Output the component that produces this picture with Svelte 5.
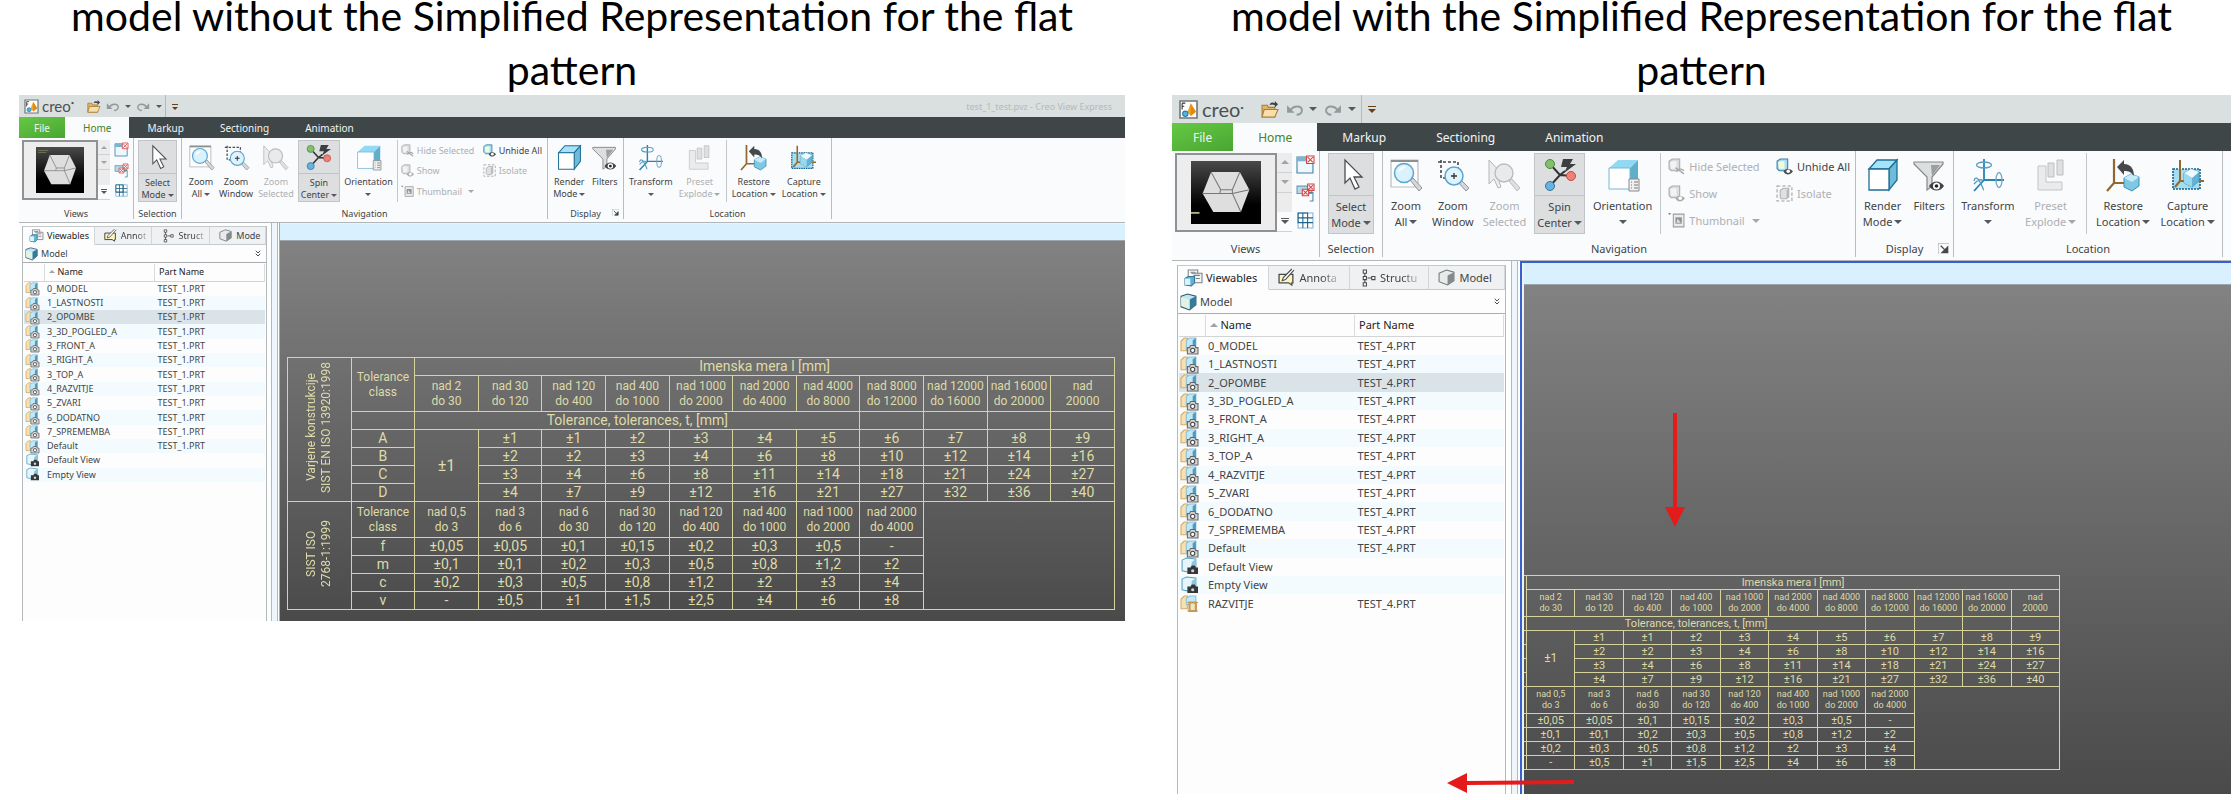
<script>
  const names = [
    "0_MODEL",
    "1_LASTNOSTI",
    "2_OPOMBE",
    "3_3D_POGLED_A",
    "3_FRONT_A",
    "3_RIGHT_A",
    "3_TOP_A",
    "4_RAZVITJE",
    "5_ZVARI",
    "6_DODATNO",
    "7_SPREMEMBA",
    "Default",
  ];

  const listFor = (part) => [
    ...names.map((name) => ({ name, part, icon: "combo" })),
    { name: "Default View", part: "", icon: "view" },
    { name: "Empty View", part: "", icon: "view" },
  ];

  const windows = [
    {
      id: "without",
      size: "compact",
      caption: "model without the Simplified Representation for the flat pattern",
      title: "test_1_test.pvz - Creo View Express",
      tabs: ["Viewables", "Annot", "Struct", "Mode"],
      rows: listFor("TEST_1.PRT"),
      moved: false,
    },
    {
      id: "with",
      size: "regular",
      caption: "model with the Simplified Representation for the flat pattern",
      title: "",
      tabs: ["Viewables", "Annota", "Structu", "Model"],
      rows: [
        ...listFor("TEST_4.PRT"),
        { name: "RAZVITJE", part: "TEST_4.PRT", icon: "flat" },
      ],
      moved: true,
    },
  ];

  const tabIcons = ["viewables", "annot", "struct", "model"];

  const weldSizes = [
    ["nad 2", "do 30"],
    ["nad 30", "do 120"],
    ["nad 120", "do 400"],
    ["nad 400", "do 1000"],
    ["nad 1000", "do 2000"],
    ["nad 2000", "do 4000"],
    ["nad 4000", "do 8000"],
    ["nad 8000", "do 12000"],
    ["nad 12000", "do 16000"],
    ["nad 16000", "do 20000"],
    ["nad", "20000"],
  ];
  const weldRows = [
    ["A", 1, 1, 2, 3, 4, 5, 6, 7, 8, 9],
    ["B", 2, 2, 3, 4, 6, 8, 10, 12, 14, 16],
    ["C", 3, 4, 6, 8, 11, 14, 18, 21, 24, 27],
    ["D", 4, 7, 9, 12, 16, 21, 27, 32, 36, 40],
  ];
  const isoSizes = [
    ["nad 0,5", "do 3"],
    ["nad 3", "do 6"],
    ["nad 6", "do 30"],
    ["nad 30", "do 120"],
    ["nad 120", "do 400"],
    ["nad 400", "do 1000"],
    ["nad 1000", "do 2000"],
    ["nad 2000", "do 4000"],
  ];
  const isoRows = [
    ["f", "±0,05", "±0,05", "±0,1", "±0,15", "±0,2", "±0,3", "±0,5", "-"],
    ["m", "±0,1", "±0,1", "±0,2", "±0,3", "±0,5", "±0,8", "±1,2", "±2"],
    ["c", "±0,2", "±0,3", "±0,5", "±0,8", "±1,2", "±2", "±3", "±4"],
    ["v", "-", "±0,5", "±1", "±1,5", "±2,5", "±4", "±6", "±8"],
  ];

  let selected = $state({ without: 2, with: 2 });
</script>

{#snippet bigIcon(name)}
  <svg class="big-icon" viewBox="0 0 32 32" aria-hidden="true">
    {#if name === "select"}
      <path d="M10 1v23l5-5 5 11 4-2-5-10h8z" fill="#fff" stroke="#4a4f52" stroke-width="1.3" />
    {:else if name === "zoomAll"}
      <path d="M1 1h27v27H1z" fill="#fdfdfd" stroke="#b9bdbf" stroke-width="1.2" />
      <path d="M1 1h27v2H1z" fill="#8b9093" />
      <path d="M20 21l3-2 9 10-3 3z" fill="#d5d8da" stroke="#8f9497" />
      <circle cx="14" cy="14" r="9.500" fill="#d9f2fd" stroke="#5ba6ce" stroke-width="1.5" />
      <path d="M8 13c1-4 4-6 8-6-2 3-5 4-8 6z" fill="#fff" />
    {:else if name === "zoomWindow"}
      <path d="M4 1v18h6M1 3h20v6" fill="none" stroke="#45494b" stroke-width="1.6" stroke-dasharray="3 2" />
      <path d="M21 23l3-2 8 8-3 3z" fill="#d5d8da" stroke="#8f9497" />
      <circle cx="17" cy="17" r="9" fill="#dff3fd" stroke="#5ba6ce" stroke-width="1.5" />
      <path d="M17 14v6M14 17h6" stroke="#333" stroke-width="1.3" />
    {:else if name === "zoomSelected"}
      <path d="M1 1v24l5-5 4 9 3-1-3-9h8z" fill="#ececec" stroke="#b4b6b8" />
      <path d="M21 22l3-2 8 9-3 3z" fill="#dfe0e0" stroke="#b9bbbc" />
      <circle cx="16" cy="14" r="9" fill="#e9eaeb" stroke="#babcbd" stroke-width="1.4" />
    {:else if name === "spin"}
      <path d="M6 5l10 11L6 27M16 16l12 1M16 16l5-4" fill="none" stroke="#333" stroke-width="2" />
      <path d="M19 0h10l-3 5h6L20 14l3-6h-6z" fill="#3b3f41" />
      <circle cx="6" cy="5" r="4.500" fill="#83bf6d" stroke="#4b8a38" />
      <circle cx="6" cy="27" r="4.500" fill="#69b2de" stroke="#2d77a5" />
      <circle cx="27" cy="17" r="4.500" fill="#ee8279" stroke="#c04b43" />
    {:else if name === "orientation"}
      <path d="M2 9l9-8h20l-8 8z" fill="#93d9f3" />
      <path d="M23 9l8-8v20l-8 9z" fill="#5fafcb" />
      <path d="M2 9h21v21H2z" fill="#fff" stroke="#74b7d6" />
      <path d="M22 20h10v12H22z" fill="#f1f1f1" stroke="#85898c" />
      <path d="M24 23h1m2 0h4M24 26h1m2 0h4M24 29h1m2 0h4" stroke="#777" />
    {:else if name === "render"}
      <path d="M2 10l8-9h20l-8 9z" fill="#a5e1f8" stroke="#1f6f95" stroke-width="1.3" />
      <path d="M22 10l8-9v20l-8 10z" fill="#6dbcd9" stroke="#1f6f95" stroke-width="1.3" />
      <path d="M2 10h20v21H2z" fill="#fff" stroke="#1f6f95" stroke-width="1.3" />
    {:else if name === "filters"}
      <path d="M1 3h29v2L19 18v9l-5 4V18L1 5z" fill="#dcdedf" stroke="#85898b" stroke-width="1.2" />
      <path d="M18 6h9l-8 11z" fill="#9b9fa1" />
      <path d="M16 27c4-6 11-6 15 0-4 6-11 6-15 0z" fill="#3f4345" />
      <circle cx="23.500" cy="27" r="3.500" fill="#fff" />
      <circle cx="23.500" cy="27" r="1.800" fill="#222" />
    {:else if name === "transform"}
      <path d="M12 0v21h20M12 21L2 32" fill="none" stroke="#2583b5" stroke-width="1.8" />
      <ellipse cx="12" cy="6" rx="7.500" ry="3" fill="none" stroke="#5a9dc0" stroke-width="1.3" />
      <ellipse cx="27" cy="21" rx="3" ry="7.500" fill="none" stroke="#7aa8bd" stroke-width="1.3" />
      <path d="M2 22c1-5 4-3 6 1s4 8 3 8M2 25c4-5 8-5 9-3" fill="none" stroke="#4e98be" stroke-width="1.3" />
    {:else if name === "preset"}
      <path d="M3 7h8v16h16v8H3z" fill="#ebebec" stroke="#c3c5c6" />
      <path d="M13 4h6v14h-6zM22 1h6v15h-6z" fill="#dfe0e1" stroke="#bcbebf" />
    {:else if name === "restore"}
      <path d="M7 0v24h12M7 24l-7 8" fill="none" stroke="#91692e" stroke-width="2.200" />
      <path d="M17 19l7-4 8 3v9l-7 5-8-4z" fill="#7ec8e6" stroke="#3f8fb4" />
      <path d="M17 19l7-4 8 3-7 5z" fill="#c6ebf8" />
      <path d="M10 8l7-7v4c7 0 10 5 10 12-3-4-5-5-10-5v4z" fill="#45494b" />
    {:else if name === "capture"}
      <path d="M1 10h27v20H1z" fill="#a8dcef" stroke="#11638f" stroke-width="1.6" stroke-dasharray="2 1" />
      <path d="M8 1v21h24M8 22l-5 6" fill="none" stroke="#91692e" stroke-width="2" />
      <path d="M12 14l7-4 8 3v9l-7 6-8-4z" fill="#64b3d5" stroke="#4a9dc2" />
      <path d="M12 14l7-4 8 3-7 6z" fill="#eefaff" />
      <path d="M12 14l8 5v9l-8-4z" fill="#9bd8ef" />
    {/if}
  </svg>
{/snippet}

{#snippet smallIcon(name)}
  <svg class="small-icon" viewBox="0 0 16 16" aria-hidden="true">
    {#if name === "app"}
      <path d="M0 0h16v16H0z" fill="#fff" stroke="#707577" stroke-width="1.5" />
      <path d="M10 2l5 8-5 4-3-4z" fill="#f4a62c" />
      <path d="M10 2l5 8-5 4z" fill="#e18914" />
      <path d="M2 2v6M2 2h3M2 5h2" stroke="#333" />
      <circle cx="5" cy="12" r="2.500" fill="#53b5df" stroke="#2a7fa6" />
    {:else if name === "open"}
      <path d="M1 4h5l1 2h6v9H1z" fill="#e0b565" stroke="#a87e38" />
      <path d="M3 8h13l-3 7H1z" fill="#f6dfa9" stroke="#a87e38" />
      <path d="M8 4c1-3 3-3 5-2V0l3 3-3 3V4c-2-1-3-1-5 0z" fill="#3e4244" />
    {:else if name === "undo"}
      <path d="M4 9c3-5 11-5 11 0 0 2-2 4-5 4" fill="none" stroke="#94999b" stroke-width="1.8" />
      <path d="M1 4v7h7z" fill="#94999b" />
    {:else if name === "redo"}
      <path d="M12 9C9 4 1 4 1 9c0 2 2 4 5 4" fill="none" stroke="#94999b" stroke-width="1.8" />
      <path d="M15 4v7H8z" fill="#94999b" />
    {:else if name === "pane"}
      <path d="M0 1h15v15H0z" fill="#eef7fb" stroke="#3f7fa2" />
      <path d="M0 1h15v4H0z" fill="#7fb4cf" />
      <path d="M9 0h7v7H9z" fill="#fff" stroke="#d34242" />
      <path d="M10 1l5 5m0-5l-5 5" stroke="#d34242" />
    {:else if name === "panes"}
      <path d="M0 2h14v7H0z" fill="#b6d9ea" stroke="#6b9ab2" />
      <path d="M10 8h5v8h-3" fill="none" stroke="#4c86a6" />
      <path d="M10 0h6v6h-6zM5 5h6v6H5z" fill="#fff" stroke="#d34242" />
      <path d="M11 1l4 4m0-4l-4 4M6 6l4 4m0-4l-4 4" stroke="#d34242" />
    {:else if name === "grid"}
      <path d="M1 1h14v14H1z" fill="#fff" stroke="#7fb6d3" />
      <path d="M1 1h9v9H1zM5.500 1v14M1 5.500h14M1 10h14M10 1v14" fill="none" stroke="#1d6288" />
    {:else if name === "hide" || name === "show" || name === "unhide"}
      {@const on = name === "unhide"}
      <path d="M1 3l3-2h7v9l-2 2H3l-2-2z" fill={on ? "#a8dff4" : "#dcdddd"} stroke={on ? "#3a7f9f" : "#a9abac"} />
      <path d="M2 4l3-1h3v7H3z" fill={on ? "#f4fbd8" : "#f3f3f3"} />
      {#if name === "hide"}
        <path d="M7 9l8 6M8 13c2-3 5-3 7-1" fill="none" stroke="#a9abac" stroke-width="1.500" />
      {:else}
        <path d="M7 12.500c2-3 6-3 9 0-3 4-7 4-9 0z" fill={on ? "#4a4e50" : "#a9abac"} />
        <circle cx="11.500" cy="12.500" r="1.700" fill="#fff" />
      {/if}
    {:else if name === "thumb"}
      <path d="M0 1l3 0-1.500 2z" fill="#8c8f91" />
      <path d="M5 2h10v12H5z" fill="#ececec" stroke="#9b9ea0" />
      <path d="M7 5h6v6H7z" fill="#8f9294" />
      <path d="M9 6l3 4H8z" fill="#dedede" />
    {:else if name === "isolate"}
      <path d="M1 1h14v14H1z" fill="none" stroke="#9b9ea0" stroke-dasharray="3 2" />
      <path d="M4 5l3-2h5v8l-2 2H5l-1-1z" fill="#dfe0e0" stroke="#b0b2b3" />
      <path d="M10 5l2-2v8l-2 2z" fill="#b5b7b8" />
    {:else if name === "viewables"}
      <path d="M3 1h9v8H3z" fill="#fff" stroke="#7b8184" />
      <path d="M6 4h10v9H9" fill="#f3f5f5" stroke="#7b8184" />
      <path d="M5 3h5M8 6h6M10 9h4" stroke="#7b8184" />
      <path d="M0 9l3-2h6v6l-3 3-6-1z" fill="#62b1d4" stroke="#33789a" />
      <path d="M0 9h5v6H0z" fill="#d9f2fb" />
    {:else if name === "annot"}
      <path d="M1 5h13v8h-1v2l-3-2H1z" fill="#fbf4bd" stroke="#45494b" stroke-width="1.2" />
      <path d="M15 1L7 10l-3 1 1-3 8-8" fill="#fff" stroke="#45494b" />
    {:else if name === "struct"}
      <path d="M4 1h3v3H4zM4 7h3v3H4zM4 13h3v3H4zM12 7h3v3h-3z" fill="#fff" stroke="#45494b" />
      <path d="M5.500 4v3M5.500 10v3M8 8.500h4" stroke="#45494b" />
    {:else if name === "model"}
      <path d="M1 4l7-3 7 2v8l-6 4-8-3z" fill="#e9eaea" stroke="#73787a" />
      <path d="M9 6l6-3v8l-6 4z" fill="#858a8d" />
    {:else if name === "cube"}
      <path d="M1 3l6-2 8 2v8l-6 5-8-3z" fill="#bfe6f5" stroke="#35596a" />
      <path d="M9 6l6-3v8l-6 5z" fill="#347a9a" />
      <path d="M1 4l8 2v9l-8-3z" fill="#e1f3e4" />
    {:else if name === "combo"}
      <path d="M0 4l3-3h3v12H0z" fill="#f8e0b0" stroke="#d3ac66" />
      <path d="M5 3l3-2h6v8l-3 3H5z" fill="#c2e7f6" stroke="#8fc0d6" />
      <path d="M11 3l3-2v8l-3 3z" fill="#4b9cc0" />
      <path d="M6 10h2l1-2h4l1 2h2v6H6z" fill="#d3d5d6" stroke="#66696b" />
      <circle cx="11" cy="12.500" r="2" fill="#fff" stroke="#444" />
    {:else if name === "view"}
      <path d="M1 2l4-2 9 1v9l-4 4-9-2z" fill="#e4f6fc" stroke="#5fa3c0" />
      <path d="M10 4l4-3v9l-4 4z" fill="#88c8e2" />
      <path d="M6 9h3l1-2h3l1 2h2v6H6z" fill="#34383a" />
      <circle cx="11" cy="12" r="1.500" fill="#cfd3d4" />
    {:else if name === "flat"}
      <path d="M0 4l3-3h3v12H0z" fill="#f8e0b0" stroke="#d3ac66" />
      <path d="M5 3l3-2h6v8H5z" fill="#c2e7f6" stroke="#8fc0d6" />
      <path d="M8 7h6v8H8z" fill="#f3e4bd" stroke="#c29a58" stroke-width="2" />
      <path d="M6 7h10M6 15h10" stroke="#c29a58" />
    {/if}
  </svg>
{/snippet}

{#snippet bigButton(icon, line1, line2, caret, state)}
  <button class="big {state}" disabled={state === "off"}>
    <span class="big-top">{@render bigIcon(icon)}</span>
    <span class="big-label">
      <span>{line1}</span>
      <span class="second">{line2}{#if caret}<i class="caret"></i>{/if}</span>
    </span>
  </button>
{/snippet}

{#snippet smallButton(icon, label, off, caret)}
  <button class="small" disabled={off}>
    {@render smallIcon(icon)}
    <span>{label}</span>
    {#if caret}<i class="caret"></i>{/if}
  </button>
{/snippet}

{#snippet sizeHead(lines)}
  <th scope="col">{lines[0]}<br />{lines[1]}</th>
{/snippet}

<!-- a moved table has slid under the side panel: only the edge of its class column is left -->
{#snippet toleranceTable(moved)}
  <table class="tolerances">
    <colgroup>
      {#if !moved}<col />{/if}
      <col class:edge={moved} />
      <col span="11" />
    </colgroup>
    <tbody>
      <tr>
        {#if !moved}
          <th rowspan="7" class="standard"><span>Varjene konstrukcije<br />SIST EN ISO 13920:1998</span></th>
        {/if}
        <th rowspan="2">{#if !moved}Tolerance<br />class{/if}</th>
        <th colspan="11" class="heading">Imenska mera l [mm]</th>
      </tr>
      <tr class="tall">
        {#each weldSizes as size}
          {@render sizeHead(size)}
        {/each}
      </tr>
      <tr>
        <td></td>
        <th colspan="7" class="heading">Tolerance, tolerances, t, [mm]</th>
        <td></td>
        <td></td>
        <td></td>
        <td></td>
      </tr>
      {#each weldRows as [grade, ...values], i}
        <tr>
          <td>{moved ? "" : grade}</td>
          {#if i === 0}
            <td rowspan="4" class="shared">±1</td>
          {/if}
          {#each values as value}
            <td>±{value}</td>
          {/each}
        </tr>
      {/each}
      <tr class="tall">
        {#if !moved}
          <th rowspan="5" class="standard"><span>SIST ISO<br />2768-1:1999</span></th>
        {/if}
        <th>{#if !moved}Tolerance<br />class{/if}</th>
        {#each isoSizes as size}
          {@render sizeHead(size)}
        {/each}
        <td rowspan="5" colspan="3"></td>
      </tr>
      {#each isoRows as [grade, ...values]}
        <tr>
          <td>{moved ? "" : grade}</td>
          {#each values as value}
            <td>{value}</td>
          {/each}
        </tr>
      {/each}
    </tbody>
  </table>
{/snippet}

<main>
  {#each windows as win}
    <figure class={win.size}>
      <figcaption>{win.caption}</figcaption>
      <div class="window">
        <header class="titlebar">
          {@render smallIcon("app")}
          <span class="brand">creo<sup>•</sup></span>
          <button class="quick" aria-label="Open">{@render smallIcon("open")}</button>
          <button class="quick" aria-label="Undo">{@render smallIcon("undo")}<i class="caret"></i></button>
          <button class="quick" aria-label="Redo">{@render smallIcon("redo")}<i class="caret"></i></button>
          <button class="quick customize" aria-label="Customize toolbar"><i class="caret"></i></button>
          <span class="doc-title">{win.title}</span>
        </header>

        <nav class="ribbon-tabs">
          <button class="file">File</button>
          <button class="home">Home</button>
          <button>Markup</button>
          <button>Sectioning</button>
          <button>Animation</button>
        </nav>

        <div class="ribbon">
          <section class="group views">
            <div class="tools">
              <button class="thumbnail" aria-label="Current view">
                <svg viewBox="0 0 66 68" preserveAspectRatio="none" aria-hidden="true">
                  <linearGradient id="shade-{win.id}" x1="0" y1="0" x2="0" y2="1">
                    <stop offset="0" stop-color="#4a4a4a" />
                    <stop offset="0.7" stop-color="#000" />
                  </linearGradient>
                  <path d="M0 0h66v68H0z" fill="url(#shade-{win.id})" />
                  <path d="M19 12h27l9 19-8 24H21L11 35z" fill="#dedede" />
                  <path d="M19 12l9 19h11l7-19M28 31l-1 4h12l8 20M39 31v4M11 35h16M39 35l16-4" fill="none" stroke="#777" />
                  {#if win.size === "compact"}
                    <path d="M3 5h14M3 8h11" stroke="#8a8a5c" />
                  {:else}
                    <path d="M0 56h8" stroke="#b5b28a" stroke-width="2" />
                  {/if}
                </svg>
              </button>
              <div class="stepper">
                <button aria-label="Previous view"><i class="caret up"></i></button>
                <button aria-label="Next view"><i class="caret pale"></i></button>
                <button class="more" aria-label="More views"><i class="caret"></i></button>
              </div>
              <div class="pane-icons">
                <button aria-label="Close pane">{@render smallIcon("pane")}</button>
                <button aria-label="Close all panes">{@render smallIcon("panes")}</button>
                <button aria-label="Pane layout">{@render smallIcon("grid")}</button>
              </div>
            </div>
            <h2>Views</h2>
          </section>
          <section class="group selection">
            <div class="tools">
              {@render bigButton("select", "Select", "Mode", true, "on")}
            </div>
            <h2>Selection</h2>
          </section>
          <section class="group navigation">
            <div class="tools">
              {@render bigButton("zoomAll", "Zoom", "All", true, "")}
              {@render bigButton("zoomWindow", "Zoom", "Window", false, "")}
              {@render bigButton("zoomSelected", "Zoom", "Selected", false, "off")}
              {@render bigButton("spin", "Spin", "Center", true, "on")}
              {@render bigButton("orientation", "Orientation", "", true, "")}
              <div class="rule"></div>
              <div class="stack">
                {@render smallButton("hide", "Hide Selected", true, false)}
                {@render smallButton("show", "Show", true, false)}
                {@render smallButton("thumb", "Thumbnail", true, true)}
              </div>
              <div class="stack last">
                {@render smallButton("unhide", "Unhide All", false, false)}
                {@render smallButton("isolate", "Isolate", true, false)}
              </div>
            </div>
            <h2>Navigation</h2>
          </section>
          <section class="group display">
            <div class="tools">
              {@render bigButton("render", "Render", "Mode", true, "")}
              {@render bigButton("filters", "Filters", "", false, "")}
            </div>
            <h2>Display</h2>
            <button class="launcher" aria-label="Display options">
              <svg viewBox="0 0 8 8" aria-hidden="true">
                <path d="M0 8V0h8" fill="none" stroke="#b5b9bb" />
                <path d="M2 2l3 3M7 3v4H3z" fill="#45494b" stroke="#45494b" />
              </svg>
            </button>
          </section>
          <section class="group location">
            <div class="tools">
              {@render bigButton("transform", "Transform", "", true, "")}
              {@render bigButton("preset", "Preset", "Explode", true, "off")}
              <div class="rule"></div>
              {@render bigButton("restore", "Restore", "Location", true, "")}
              {@render bigButton("capture", "Capture", "Location", true, "")}
            </div>
            <h2>Location</h2>
          </section>
        </div>

        <div class="content">
          <aside>
            <div class="side-tabs">
              {#each win.tabs as tab, i}
                <button class:active={i === 0} class:fade={i === 1 || i === 2}>
                  {@render smallIcon(tabIcons[i])}
                  <span>{tab}</span>
                </button>
              {/each}
            </div>
            <div class="model-bar">
              {@render smallIcon("cube")}
              <span>Model</span>
              <button aria-label="Expand">
                <svg viewBox="0 0 8 10" aria-hidden="true">
                  <path d="M1 1l3 3 3-3M1 5l3 3 3-3" fill="none" stroke="#45494b" stroke-width="1.3" />
                </svg>
              </button>
            </div>
            <div class="list">
              <table class="viewables">
                <thead>
                  <tr>
                    <th class="icon-col"></th>
                    <th scope="col"><i class="caret up"></i>Name</th>
                    <th scope="col" class="part-col">Part Name</th>
                  </tr>
                </thead>
                <tbody>
                  {#each win.rows as row, i}
                    <tr class:selected={selected[win.id] === i} onclick={() => (selected[win.id] = i)}>
                      <td>{@render smallIcon(row.icon)}</td>
                      <td>{row.name}</td>
                      <td>{row.part}</td>
                    </tr>
                  {/each}
                </tbody>
              </table>
            </div>
          </aside>
          <div class="splitter"></div>
          <div class="stage">
            <div class="stage-bar"></div>
            <div class="canvas">
              {@render toleranceTable(win.moved)}
            </div>
          </div>
        </div>

        {#if win.moved}
          <svg class="arrow down" viewBox="0 0 20 114" aria-hidden="true">
            <path d="M8 0h4v94h8l-10 20L0 94h8z" fill="#e31b1b" />
          </svg>
          <svg class="arrow left" viewBox="0 0 127 20" aria-hidden="true">
            <path d="M127 7v4l-107 1v8L0 10 20 0v8z" fill="#e31b1b" />
          </svg>
        {/if}
      </div>
    </figure>
  {/each}
</main>

<style>
  :global(body) {
    margin: 0;
    background: #fff;
  }
  main {
    display: grid;
    grid-template-columns: 1106fr 1059fr;
    gap: 47px;
    align-items: start;
    padding: 0 9px 0 19px;
    overflow: hidden;
    font-family: "Noto Sans", "Open Sans", sans-serif;
  }
  figure {
    margin: 0;
    min-width: 0;
  }
  figcaption {
    margin: -11px 0 -2px;
    padding: 0 20px;
    font-family: Lato, sans-serif;
    font-size: 41px;
    line-height: 54px;
    text-align: center;
    color: #000;
  }
  .compact {
    --text: 9px;
    --tab-text: 10px;
    --line: 12px;
    --title: 22px;
    --tabs: 21px;
    --tab-pad: 18px;
    --file-pad: 15px;
    --tools: 62px;
    --ribbon: 85px;
    --split: 32px;
    --big: 25px;
    --small: 13px;
    --caret: 3px;
    --brand: 15px;
    --pad: 3px;
    --nav-gap: 3px;
    --views: 115px;
    --selection: 48px;
    --navigation: 366px;
    --display: 76px;
    --location: 208px;
    --side: 245px;
    --side-tabs: 19px;
    --model-bar: 17px;
    --list-head: 17px;
    --icon-col: 20px;
    --part-col: 110px;
    --list-height: 218px;
    --split-gap: 1px;
    --bar: 16px;
    --canvas: 380px;
    --table: 828px;
    --table-left: 7px;
    --table-bottom: 11px;
    --row: 18px;
    --tall: 36px;
    --cell-text: 12px;
    --value-text: 14px;
    --cell-line: 15px;
    --shared-text: 16px;
    --stage-edge: 1px solid #a5abb0;
  }
  .regular {
    --text: 11px;
    --tab-text: 12px;
    --line: 16px;
    --title: 28px;
    --tabs: 28px;
    --tab-pad: 25px;
    --file-pad: 21px;
    --tools: 81px;
    --ribbon: 110px;
    --split: 41px;
    --big: 32px;
    --small: 17px;
    --caret: 4px;
    --brand: 20px;
    --pad: 4px;
    --nav-gap: 7px;
    --views: 148px;
    --selection: 63px;
    --navigation: 473px;
    --display: 98px;
    --location: 269px;
    --side: 329px;
    --side-tabs: 25px;
    --model-bar: 23px;
    --list-head: 21px;
    --icon-col: 26px;
    --part-col: 149px;
    --list-height: 298px;
    --split-gap: 2px;
    --bar: 21px;
    --canvas: 509px;
    --table: 537px;
    --table-left: -1px;
    --table-bottom: 24px;
    --row: 14px;
    --tall: 27px;
    --cell-text: 9px;
    --value-text: 11px;
    --cell-line: 11px;
    --shared-text: 12px;
    --stage-edge: 2px solid #3c5fcf;
  }
  .window {
    position: relative;
    font-size: var(--text);
    color: #3f4446;
    background: #fafbfd;
  }
  button {
    margin: 0;
    padding: 0;
    border: 0;
    background: none;
    font: inherit;
    color: inherit;
  }
  .big-icon {
    display: block;
    width: var(--big);
    height: var(--big);
    overflow: visible;
  }
  .small-icon {
    display: block;
    flex: none;
    width: var(--small);
    height: var(--small);
    overflow: visible;
  }
  .caret {
    display: inline-block;
    border: var(--caret) solid transparent;
    border-top-color: #55595c;
    border-bottom: 0;
  }
  .caret.up {
    border-top: 0;
    border-bottom: var(--caret) solid #a0a4a6;
  }
  .caret.pale {
    border-top-color: #a0a4a6;
  }

  .titlebar {
    display: flex;
    align-items: center;
    gap: 6px;
    height: var(--title);
    padding: 0 12px 0 6px;
    background: #dadfdf;
  }
  .regular .titlebar {
    gap: 8px;
    padding-left: 8px;
  }
  .brand {
    margin: 0 7px 0 -2px;
    font-family: Lato, sans-serif;
    font-size: var(--brand);
    line-height: var(--title);
    color: #4b5053;
  }
  .regular .brand {
    margin: 0 9px 0 -3px;
  }
  .brand sup {
    font-size: 6px;
    line-height: 0;
    vertical-align: 7px;
  }
  .quick {
    display: flex;
    align-items: center;
    gap: 6px;
  }
  .quick.customize {
    height: 100%;
    margin-left: -3px;
    padding-left: 6px;
    border-left: 1px solid #b4b9ba;
  }
  .customize .caret {
    border-top-color: #6a3f14;
    position: relative;
    top: 2px;
  }
  .customize .caret::before {
    content: "";
    position: absolute;
    left: calc(var(--caret) * -1);
    bottom: calc(var(--caret) + 2px);
    width: calc(var(--caret) * 2);
    height: 1px;
    background: #6a3f14;
  }
  .doc-title {
    margin-left: auto;
    padding-right: 1px;
    color: #b4bbbb;
  }

  .ribbon-tabs {
    display: flex;
    height: var(--tabs);
    background: #3f4648;
    color: #f2f4f4;
    font-size: var(--tab-text);
  }
  .ribbon-tabs button {
    padding: 0 var(--tab-pad);
  }
  .ribbon-tabs .file {
    padding: 0 var(--file-pad);
    background: linear-gradient(160deg, #66c944, #49a532);
  }
  .ribbon-tabs .home {
    background: #fafbfd;
    color: #43832a;
  }

  .ribbon {
    display: flex;
    height: var(--ribbon);
    box-sizing: border-box;
    border-bottom: 1px solid #b1b6b8;
    background: #fafbfd;
  }
  .group {
    position: relative;
    box-sizing: border-box;
    flex: none;
    height: calc(100% - 3px);
    padding-top: 2px;
    border-right: 1px solid #b9bdbf;
  }
  .group.views {
    width: var(--views);
  }
  .group.selection {
    width: var(--selection);
  }
  .group.navigation {
    width: var(--navigation);
  }
  .group.display {
    width: var(--display);
  }
  .group.location {
    width: var(--location);
  }
  .group h2 {
    margin: 0;
    font-size: var(--text);
    font-weight: 400;
    line-height: calc(var(--ribbon) - var(--tools) + 1px);
    text-align: center;
  }
  .tools {
    display: flex;
    justify-content: space-around;
    height: var(--tools);
    padding: 0 2px;
  }
  .navigation .tools {
    justify-content: flex-start;
    gap: var(--nav-gap);
    padding: 0 5px;
  }
  .big {
    display: flex;
    flex-direction: column;
    box-sizing: border-box;
    min-width: calc(var(--big) + var(--pad));
    border: 1px solid transparent;
    line-height: var(--line);
    text-align: center;
  }
  .big.on {
    padding: 0 2px;
    border-color: #c2c5c8;
    background: #dcdee0;
  }
  .big-top {
    display: flex;
    align-items: center;
    justify-content: center;
    height: var(--split);
  }
  .on .big-top {
    margin: 0 -2px;
    border-bottom: 1px solid #c2c5c8;
  }
  .big-label {
    display: flex;
    flex-direction: column;
    width: 100%;
    padding-top: 3px;
    white-space: nowrap;
  }
  .second {
    display: flex;
    align-items: center;
    justify-content: center;
    gap: 2px;
    min-height: var(--line);
  }
  button:disabled {
    color: #adb0b2;
  }
  button:disabled .caret {
    border-top-color: #a5a8aa;
  }
  .rule {
    width: 1px;
    background: #c4c7c9;
  }
  .stack {
    display: grid;
    grid-template-rows: repeat(3, 1fr);
  }
  .stack.last {
    margin-left: auto;
  }
  .small {
    display: flex;
    align-items: center;
    gap: var(--pad);
    white-space: nowrap;
  }
  .small .caret {
    margin-left: 3px;
  }
  .launcher {
    position: absolute;
    right: 1px;
    bottom: 0;
    width: var(--small);
    padding: 3px;
  }
  .launcher svg {
    display: block;
  }

  .views .tools {
    justify-content: flex-start;
    padding: 0 3px;
  }
  .thumbnail {
    flex: 1;
    box-sizing: border-box;
    height: calc(var(--tools) - 2px);
    padding: 5px 12px;
    border: 2px solid #8f9294;
    background: #ededee;
  }
  .regular .thumbnail {
    padding: 6px 14px;
  }
  .thumbnail svg {
    display: block;
    width: 100%;
    height: 100%;
  }
  .stepper {
    display: flex;
    flex-direction: column;
    width: 12px;
    height: calc(var(--tools) - 2px);
    background: #ececed;
  }
  .regular .stepper {
    width: 15px;
  }
  .stepper button {
    display: flex;
    align-items: center;
    justify-content: center;
    height: 25%;
    border-bottom: 1px solid #cfd1d3;
  }
  .stepper .more {
    margin-top: auto;
    background: #fafbfd;
  }
  .more .caret {
    position: relative;
  }
  .more .caret::before {
    content: "";
    position: absolute;
    left: calc(var(--caret) * -1);
    bottom: calc(var(--caret) + 1px);
    width: calc(var(--caret) * 2);
    height: 1px;
    background: #55595c;
  }
  .pane-icons {
    display: flex;
    flex-direction: column;
    justify-content: space-between;
    height: calc(var(--tools) - 8px);
    padding: 3px 2px 0 5px;
  }

  .content {
    display: flex;
    background: #fdfefe;
  }
  aside {
    display: flex;
    flex-direction: column;
    flex: none;
    box-sizing: border-box;
    width: var(--side);
    margin: 3px 4px 0 3px;
    border: solid #b5b9bb;
    border-width: 0 1px;
    background: #fdfdfd;
  }
  .regular aside {
    margin: 4px 5px 0;
  }
  .side-tabs {
    display: grid;
    grid-template-columns: 72fr 58fr 58fr 56fr;
    height: var(--side-tabs);
    border-top: 1px solid #c5c9cb;
    box-sizing: border-box;
  }
  .regular .side-tabs {
    grid-template-columns: 92fr 81fr 80fr 76fr;
  }
  .side-tabs button {
    display: flex;
    align-items: center;
    gap: 4px;
    padding-left: 9px;
    border-right: 1px solid #d3d6d8;
    border-bottom: 1px solid #c5c9cb;
    background: #f0f1f3;
    white-space: nowrap;
  }
  .side-tabs .active {
    padding-left: 7px;
    border-bottom-color: transparent;
    background: #fdfdfd;
    color: #222;
  }
  .side-tabs .fade span {
    mask-image: linear-gradient(90deg, #000 60%, rgba(0, 0, 0, 0.3));
  }
  .model-bar {
    display: flex;
    align-items: center;
    gap: 3px;
    height: var(--model-bar);
    padding: 0 5px 0 2px;
    border-bottom: 1px solid #a9adb0;
  }
  .model-bar button {
    width: 6px;
    margin-left: auto;
  }
  .model-bar svg {
    display: block;
  }
  .list {
    flex: 1;
    padding: 1px 1px 0;
  }
  .viewables {
    width: 100%;
    height: var(--list-height);
    table-layout: fixed;
    border-collapse: collapse;
    line-height: 12px;
  }
  .viewables th {
    height: var(--list-head);
    box-sizing: border-box;
    padding: 0 0 0 4px;
    border-right: 1px solid #d9dcdd;
    border-bottom: 1px solid #d2d5d7;
    font-weight: 400;
    text-align: left;
    color: #222;
  }
  .viewables th .caret {
    margin-right: 3px;
    vertical-align: 2px;
  }
  .viewables td {
    padding: 0 0 0 3px;
    white-space: nowrap;
  }
  .viewables td:first-child {
    padding-left: 2px;
  }
  .viewables tbody tr:nth-child(even) {
    background: #f4fbfe;
  }
  .viewables tbody tr.selected {
    background: #d9e3e8;
  }
  .icon-col {
    width: var(--icon-col);
  }
  .part-col {
    width: var(--part-col);
  }
  .splitter {
    flex: none;
    width: 5px;
    margin-right: var(--split-gap);
    border: solid #b3b8bb;
    border-width: 0 1px;
    background: #eef5fb;
  }

  .stage {
    flex: 1;
    min-width: 0;
    padding-top: 1px;
    border-left: var(--stage-edge);
    background: #eaf3fb;
  }
  .regular .stage {
    border-top: var(--stage-edge);
    padding: 0 0 0 2px;
  }
  .stage-bar {
    height: var(--bar);
    border-bottom: 1px solid #9aa5ad;
    background: #d9f1fe;
  }
  .canvas {
    display: flex;
    align-items: flex-end;
    box-sizing: border-box;
    min-height: var(--canvas);
    padding-bottom: var(--table-bottom);
    overflow: hidden;
    background: linear-gradient(#828282, #4a4a4a);
  }
  .tolerances {
    flex: none;
    width: var(--table);
    margin-left: var(--table-left);
    table-layout: fixed;
    border-collapse: collapse;
    font-family: Roboto, sans-serif;
    font-size: var(--value-text);
    line-height: var(--cell-line);
    color: #dedba9;
  }
  .tolerances .edge {
    width: 3px;
  }
  .tolerances td,
  .tolerances th {
    box-sizing: border-box;
    height: var(--row);
    padding: 0;
    border: 1px solid #d6d39c;
    font-weight: 400;
    text-align: center;
    white-space: nowrap;
  }
  .tolerances th {
    font-size: var(--cell-text);
  }
  .tolerances .heading {
    font-size: var(--value-text);
  }
  .tolerances .tall th {
    height: var(--tall);
  }
  .tolerances .shared {
    font-size: var(--shared-text);
  }
  .standard span {
    display: inline-block;
    writing-mode: vertical-rl;
    transform: rotate(180deg);
  }

  .arrow {
    position: absolute;
  }
  .arrow.down {
    left: 493px;
    top: 318px;
    width: 20px;
  }
  .arrow.left {
    left: 275px;
    top: 678px;
    width: 127px;
  }
</style>
